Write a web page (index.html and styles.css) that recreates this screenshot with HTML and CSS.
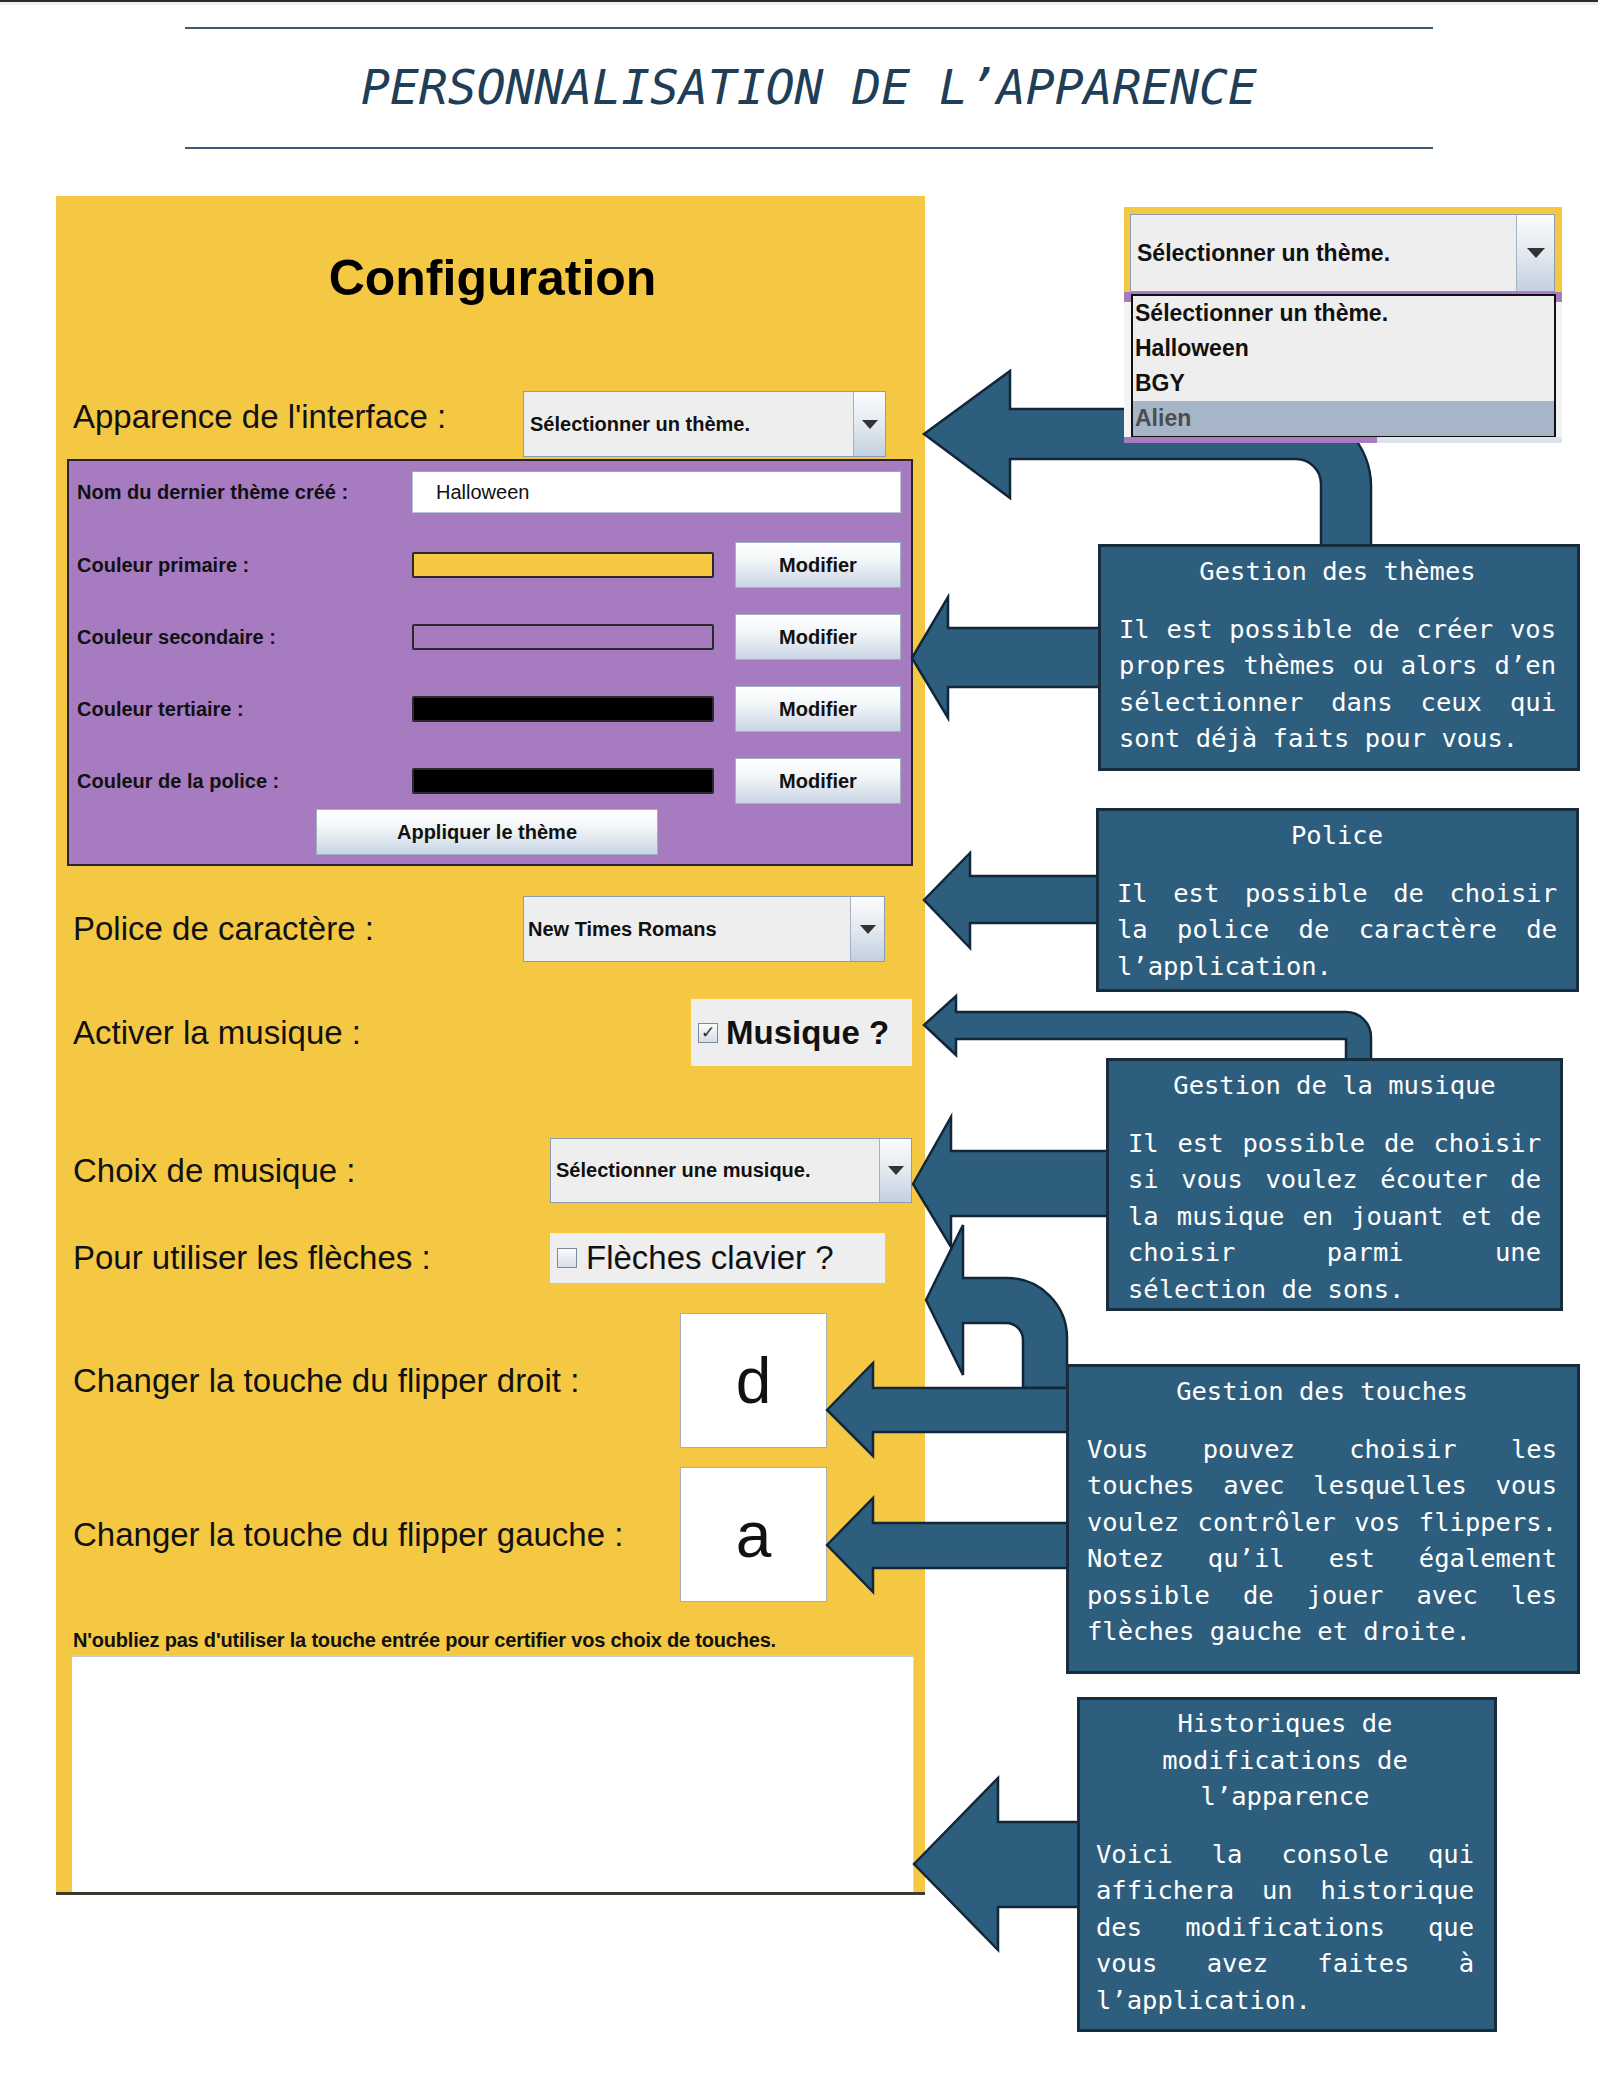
FILE: index.html
```html
<!DOCTYPE html>
<html lang="fr">

<head>
    <meta charset="UTF-8">
    <meta name="viewport" content="width=device-width, initial-scale=1.0">
    <title>Personnalisation de l'apparence</title>
    <link rel="stylesheet" href="styles.css">
</head>

<body>
    <div class="page">
        <div class="topbar"></div>

        <!-- titre du document -->
        <header class="doc-head">
            <h1>PERSONNALISATION DE L’APPARENCE</h1>
        </header>

        <!-- capture de la fenetre de configuration -->
        <main class="config">
            <h2>Configuration</h2>

            <div class="row row-apparence">
                <span class="label label-high">Apparence de l'interface :</span>
                <div class="combo combo-theme">
                    <span class="combo-text">Sélectionner un thème.</span>
                    <span class="combo-btn"><i class="tri"></i></span>
                </div>
            </div>

            <section class="theme-panel">
                <div class="trow trow-name">
                    <span class="tlabel">Nom du dernier thème créé :</span>
                    <div class="field">Halloween</div>
                </div>
                <div class="trow trow-color first">
                    <span class="tlabel">Couleur primaire :</span>
                    <span class="swatch sw-primary"></span>
                    <button class="btn btn-mod">Modifier</button>
                </div>
                <div class="trow trow-color">
                    <span class="tlabel">Couleur secondaire :</span>
                    <span class="swatch sw-secondary"></span>
                    <button class="btn btn-mod">Modifier</button>
                </div>
                <div class="trow trow-color">
                    <span class="tlabel">Couleur tertiaire :</span>
                    <span class="swatch sw-dark"></span>
                    <button class="btn btn-mod">Modifier</button>
                </div>
                <div class="trow trow-color">
                    <span class="tlabel">Couleur de la police :</span>
                    <span class="swatch sw-dark"></span>
                    <button class="btn btn-mod">Modifier</button>
                </div>
                <button class="btn btn-apply">Appliquer le thème</button>
            </section>

            <div class="row row-police">
                <span class="label">Police de caractère :</span>
                <div class="combo combo-police">
                    <span class="combo-text">New Times Romans</span>
                    <span class="combo-btn"><i class="tri"></i></span>
                </div>
            </div>

            <div class="row row-musique">
                <span class="label">Activer la musique :</span>
                <label class="check check-musique"><span class="cb">✓</span>Musique ?</label>
            </div>

            <div class="row row-choix">
                <span class="label">Choix de musique :</span>
                <div class="combo combo-music">
                    <span class="combo-text">Sélectionner une musique.</span>
                    <span class="combo-btn"><i class="tri"></i></span>
                </div>
            </div>

            <div class="row row-fleches">
                <span class="label">Pour utiliser les flèches :</span>
                <label class="check check-fleches"><span class="cb"></span>Flèches clavier ?</label>
            </div>

            <div class="row row-key">
                <span class="label">Changer la touche du flipper droit :</span>
                <div class="key">d</div>
            </div>

            <div class="row row-key row-key2">
                <span class="label">Changer la touche du flipper gauche :</span>
                <div class="key">a</div>
            </div>

            <p class="hint">N'oubliez pas d'utiliser la touche entrée pour certifier vos choix de touches.</p>
            <div class="console"></div>
        </main>

        <!-- fleches des annotations -->
        <svg class="arrows" width="1598" height="2078" viewBox="0 0 1598 2078">
            <path d="M924 434 L1010 371 L1010 409 L1294 409 A77 77 0 0 1 1371 486 L1371 546 L1321 546 L1321 484 A25 25 0 0 0 1296 459 L1010 459 L1010 498 Z" />
            <path d="M912 658 L948 597 L948 628 L1101 628 L1101 687 L948 687 L948 718 Z" />
            <path d="M924 900 L970 853 L970 876 L1099 876 L1099 923 L970 923 L970 948 Z" />
            <path d="M924 1025 L956 996 L956 1012 L1346 1012 A25 25 0 0 1 1371 1037 L1371 1060 L1346 1060 L1346 1039 L956 1039 L956 1055 Z" />
            <path d="M913 1184 L951 1117 L951 1151 L1109 1151 L1109 1216 L951 1216 L951 1247 Z" />
            <path d="M926 1300 L963 1225 L963 1278 L1007 1278 A60 60 0 0 1 1067 1338 L1067 1388 L1023 1388 L1023 1340 A17 17 0 0 0 1006 1323 L963 1323 L963 1375 Z" />
            <path d="M827 1410 L873 1363 L873 1388 L1069 1388 L1069 1432 L873 1432 L873 1456 Z" />
            <path d="M827 1545 L873 1498 L873 1523 L1069 1523 L1069 1568 L873 1568 L873 1592 Z" />
            <path d="M914 1864 L998 1778 L998 1822 L1080 1822 L1080 1907 L998 1907 L998 1950 Z" />
        </svg>

        <!-- annotations -->
        <div class="note note-themes">
            <div class="note-title">Gestion des thèmes</div>
            <span class="ln">Il est possible de créer vos</span>
            <span class="ln">propres thèmes ou alors d’en</span>
            <span class="ln">sélectionner dans ceux qui</span>
            <span class="ln last">sont déjà faits pour vous.</span>
        </div>

        <div class="note note-police">
            <div class="note-title">Police</div>
            <span class="ln">Il est possible de choisir</span>
            <span class="ln">la police de caractère de</span>
            <span class="ln last">l’application.</span>
        </div>

        <div class="note note-musique">
            <div class="note-title">Gestion de la musique</div>
            <span class="ln">Il est possible de choisir</span>
            <span class="ln">si vous voulez écouter de</span>
            <span class="ln">la musique en jouant et de</span>
            <span class="ln">choisir parmi une</span>
            <span class="ln last">sélection de sons.</span>
        </div>

        <div class="note note-touches">
            <div class="note-title">Gestion des touches</div>
            <span class="ln">Vous pouvez choisir les</span>
            <span class="ln">touches avec lesquelles vous</span>
            <span class="ln">voulez contrôler vos flippers.</span>
            <span class="ln">Notez qu’il est également</span>
            <span class="ln">possible de jouer avec les</span>
            <span class="ln last">flèches gauche et droite.</span>
        </div>

        <div class="note note-histo">
            <div class="note-title">Historiques de<br>modifications de<br>l’apparence</div>
            <span class="ln">Voici la console qui</span>
            <span class="ln">affichera un historique</span>
            <span class="ln">des modifications que</span>
            <span class="ln">vous avez faites à</span>
            <span class="ln last">l’application.</span>
        </div>

        <!-- capture de la liste deroulante ouverte -->
        <div class="popup">
            <div class="combo combo-popup">
                <span class="combo-text">Sélectionner un thème.</span>
                <span class="combo-btn"><i class="tri"></i></span>
            </div>
            <ul class="popup-list">
                <li>Sélectionner un thème.</li>
                <li>Halloween</li>
                <li>BGY</li>
                <li class="sel">Alien</li>
            </ul>
            <div class="popup-foot"></div>
        </div>
    </div>
</body>

</html>
```

FILE: styles.css
```css
* {
    margin: 0;
    padding: 0;
    box-sizing: border-box;
}

body {
    background-color: #fff;
    font-family: "Liberation Sans", Arial, sans-serif;
    color: #111;
}

.page {
    position: relative;
    width: 1598px;
    height: 2078px;
    overflow: hidden;
}

.topbar {
    height: 5px;
    border-top: 2px solid #2b2b2b;
    background-color: #f0f0f0;
}

/* titre */

.doc-head {
    margin: 22px 0 0 185px;
    width: 1248px;
    padding: 34px 0 36px;
    border-top: 2px solid #3f5c77;
    border-bottom: 2px solid #3f5c77;
    text-align: center;
}

.doc-head h1 {
    font-family: "DejaVu Sans Mono", monospace;
    font-style: italic;
    font-weight: normal;
    font-size: 48px;
    line-height: 48px;
    color: #213e58;
}

/* fenetre de configuration */

.config {
    margin: 47px 0 0 56px;
    width: 869px;
    height: 1699px;
    padding: 57px 13px 0 17px;
    background-color: #f5c843;
    border-bottom: 3px solid #3b3a30;
}

.config h2 {
    font-size: 50px;
    line-height: 50px;
    font-weight: bold;
    text-align: center;
    color: #000;
}

.row {
    display: flex;
    align-items: center;
    justify-content: space-between;
}

.label {
    font-size: 33px;
}

.label-high {
    margin-bottom: 14px;
}

.row-apparence {
    margin-top: 88px;
    height: 66px;
}

.row-police {
    margin-top: 30px;
    height: 66px;
}

.row-musique {
    margin-top: 37px;
    height: 67px;
}

.row-choix {
    margin-top: 72px;
    height: 65px;
}

.row-fleches {
    margin-top: 30px;
    height: 50px;
}

.row-key {
    margin-top: 30px;
    height: 135px;
}

.row-key2 {
    margin-top: 19px;
}

/* listes deroulantes */

.combo {
    display: flex;
    height: 100%;
    border: 1px solid #8c9db3;
    background-color: #eee;
}

.combo-text {
    flex: 1;
    display: flex;
    align-items: center;
    padding-left: 6px;
    font-size: 20px;
    font-weight: bold;
    white-space: nowrap;
}

.combo-btn {
    width: 32px;
    display: flex;
    align-items: center;
    justify-content: center;
    border-left: 1px solid #a3b2c4;
    background: linear-gradient(#fbfcfd, #e3e9f0 50%, #c3d0df);
}

.tri {
    width: 0;
    height: 0;
    border-left: 8px solid transparent;
    border-right: 8px solid transparent;
    border-top: 9px solid #333;
}

.combo-theme {
    width: 363px;
    margin-right: 26px;
}

.combo-police {
    width: 362px;
    margin-right: 27px;
}

.combo-police .combo-text {
    padding-left: 4px;
}

.combo-police .combo-btn {
    width: 34px;
}

.combo-music {
    width: 362px;
}

.combo-music .combo-text {
    padding-left: 5px;
}

/* panneau du theme */

.theme-panel {
    margin: 2px 0 0 -6px;
    width: 846px;
    height: 407px;
    padding: 10px 10px 0 8px;
    background-color: #a67bc0;
    border: 2px solid #2b2430;
}

.trow {
    display: flex;
    align-items: center;
}

.tlabel {
    margin-right: auto;
    font-size: 20px;
    font-weight: bold;
}

.trow-name {
    height: 42px;
}

.field {
    width: 489px;
    height: 42px;
    display: flex;
    align-items: center;
    padding-left: 23px;
    font-size: 20px;
    background-color: #fff;
    border: 1px solid #b9c5d2;
    border-top-color: #96a4b4;
}

.trow-color {
    height: 46px;
    margin-top: 26px;
}

.trow-color.first {
    margin-top: 29px;
}

.swatch {
    width: 302px;
    height: 26px;
    margin-right: 21px;
    border: 2px solid #2a2a2a;
    border-radius: 2px;
}

.sw-primary {
    background-color: #f5c843;
}

.sw-secondary {
    background-color: #a67bc0;
}

.sw-dark {
    background-color: #000;
}

.btn {
    font-family: "Liberation Sans", Arial, sans-serif;
    font-size: 20px;
    font-weight: bold;
    color: #111;
    border: 1px solid #9fb0c3;
    background: linear-gradient(#ffffff, #f2f5f8 40%, #c9d5e3);
}

.btn-mod {
    width: 166px;
    height: 46px;
}

.btn-apply {
    display: block;
    width: 342px;
    height: 46px;
    margin: 5px auto 0;
    position: relative;
    left: -2px;
}

/* cases a cocher */

.check {
    display: flex;
    align-items: center;
    height: 100%;
    padding-left: 7px;
    background-color: #eee;
    font-size: 33px;
}

.cb {
    width: 20px;
    height: 20px;
    display: flex;
    align-items: center;
    justify-content: center;
    margin-right: 8px;
    border: 1px solid #7d8a98;
    background: linear-gradient(#fafbfc, #d7dee7);
    font-family: "DejaVu Sans", sans-serif;
    font-size: 17px;
    line-height: 17px;
    font-weight: bold;
    color: #2a2a2a;
}

.check-musique {
    width: 221px;
    font-weight: bold;
}

.check-fleches {
    width: 335px;
    margin-right: 27px;
}

.check-fleches .cb {
    margin-right: 9px;
}

/* touches */

.key {
    width: 147px;
    height: 135px;
    margin-right: 85px;
    display: flex;
    align-items: center;
    justify-content: center;
    background-color: #fff;
    border: 1px solid #a9aeb3;
    font-size: 64px;
    line-height: 64px;
}

.hint {
    margin-top: 27px;
    font-size: 20px;
    line-height: 22px;
    font-weight: bold;
    letter-spacing: -0.2px;
}

.console {
    margin: 4px 0 0 -1px;
    width: 842px;
    height: 237px;
    background-color: #fff;
    border-top: 2px solid #c4ced9;
    border-right: 1px solid #d6dbe0;
}

/* annotations */

.arrows {
    position: absolute;
    top: 0;
    left: 0;
    z-index: 1;
}

.arrows path {
    fill: #2e5e7e;
    stroke: #12263a;
    stroke-width: 2.5;
}

.note {
    position: absolute;
    z-index: 2;
    padding-top: 6px;
    background-color: #2e5e7e;
    border: 3px solid #182c3e;
    color: #fff;
    font-family: "DejaVu Sans Mono", monospace;
    font-size: 25.5px;
    line-height: 36.5px;
}

.note-title {
    text-align: center;
    margin-bottom: 21px;
}

.note .ln {
    display: block;
    text-align: justify;
    text-align-last: justify;
}

.note .ln.last {
    text-align-last: left;
}

.note-themes {
    left: 1098px;
    top: 544px;
    width: 482px;
    height: 227px;
    padding-left: 18px;
    padding-right: 21px;
}

.note-police {
    left: 1096px;
    top: 808px;
    width: 483px;
    height: 184px;
    padding-left: 18px;
    padding-right: 19px;
}

.note-musique {
    left: 1106px;
    top: 1058px;
    width: 457px;
    height: 253px;
    padding-left: 19px;
    padding-right: 19px;
}

.note-touches {
    left: 1066px;
    top: 1364px;
    width: 514px;
    height: 310px;
    padding-left: 18px;
    padding-right: 20px;
}

.note-histo {
    left: 1077px;
    top: 1697px;
    width: 420px;
    height: 335px;
    padding-top: 5px;
    padding-left: 16px;
    padding-right: 20px;
}

/* liste deroulante ouverte */

.popup {
    position: absolute;
    z-index: 3;
    left: 1124px;
    top: 207px;
    width: 438px;
    height: 236px;
    padding: 7px 7px 0 6px;
    background: linear-gradient(#f5c843 0 85px, #a67bc0 85px 95px, #f3f3f3 95px);
}

.combo-popup {
    width: 425px;
    height: 78px;
}

.combo-popup .combo-text {
    font-size: 23px;
    padding-left: 6px;
}

.combo-popup .combo-btn {
    width: 38px;
}

.combo-popup .tri {
    border-left-width: 9px;
    border-right-width: 9px;
    border-top-width: 10px;
}

.popup-list {
    list-style: none;
    margin: 2px 0 0 1px;
    width: 425px;
    height: 143px;
    border: 2px solid #111;
    background-color: #eee;
}

.popup-list li {
    height: 35px;
    line-height: 35px;
    padding-left: 2px;
    font-size: 23px;
    font-weight: bold;
}

.popup-list li.sel {
    background-color: #a6b5c7;
    color: #4d4d4d;
}

.popup-foot {
    margin-left: -6px;
    width: 438px;
    height: 6px;
    background: linear-gradient(to right, #a67bc0 0 253px, #dde4ec 253px);
}
```
